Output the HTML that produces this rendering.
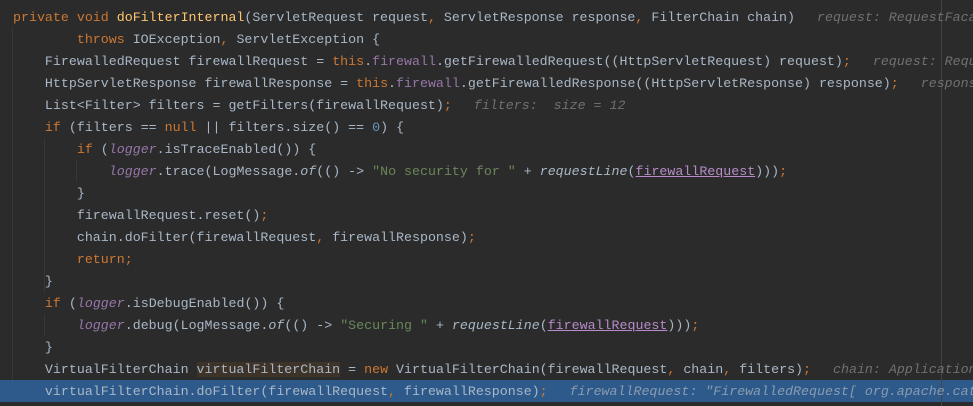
<!DOCTYPE html>
<html><head><meta charset="utf-8"><style>
html,body{margin:0;padding:0;}
body{width:973px;height:406px;background:#2b2b2b;overflow:hidden;position:relative;font-family:"Liberation Mono",monospace;font-size:13.3px;color:#a9b7c6;}
.row{position:absolute;left:0;width:973px;height:22px;line-height:23px;white-space:pre;overflow:hidden;}
.t{position:absolute;left:13px;top:0;}
.k{color:#cc7832}.m{color:#ffc66d}.f{color:#9876aa}.n{color:#6897bb}.s{color:#6a8759}
.i{font-style:italic}.h{color:#707070;font-style:italic;margin-left:6px}
.u{color:#b78cc9;text-decoration:underline}
.g{position:absolute;width:1px;background:#373737;}
.sel{background:#2d5a8a;}
.hl{background:#3e3328;}
</style></head><body>
<div class="g" style="left:12px;top:28px;height:374px"></div>
<div class="g" style="left:44px;top:138px;height:154px"></div>
<div class="g" style="left:44px;top:314px;height:22px"></div>
<div class="g" style="left:76px;top:160px;height:22px"></div>
<div class="row sel" style="top:380px"></div>
<div style="position:absolute;left:941px;top:0;width:1px;height:406px;background:#444"></div>

<div class="row" style="top:6px"><span class="t"><span class="k">private void </span><span class="m">doFilterInternal</span>(ServletRequest request<span class="k">, </span>ServletResponse response<span class="k">, </span>FilterChain chain)  <span class="h">request: RequestFacade</span></span></div>
<div class="row" style="top:28px"><span class="t">        <span class="k">throws </span>IOException<span class="k">, </span>ServletException {</span></div>
<div class="row" style="top:50px"><span class="t">    FirewalledRequest firewallRequest = <span class="k">this</span>.<span class="f">firewall</span>.getFirewalledRequest((HttpServletRequest) request)<span class="k">;</span>  <span class="h">request: RequestFacade</span></span></div>
<div class="row" style="top:72px"><span class="t">    HttpServletResponse firewallResponse = <span class="k">this</span>.<span class="f">firewall</span>.getFirewalledResponse((HttpServletResponse) response)<span class="k">;</span>  <span class="h">response: ResponseFacade</span></span></div>
<div class="row" style="top:94px"><span class="t">    List&lt;Filter&gt; filters = getFilters(firewallRequest)<span class="k">;</span>  <span class="h">filters:  size = 12</span></span></div>
<div class="row" style="top:116px"><span class="t">    <span class="k">if </span>(filters == <span class="k">null </span>|| filters.size() == <span class="n">0</span>) {</span></div>
<div class="row" style="top:138px"><span class="t">        <span class="k">if </span>(<span class="f i">logger</span>.isTraceEnabled()) {</span></div>
<div class="row" style="top:160px"><span class="t">            <span class="f i">logger</span>.trace(LogMessage.<span class="i">of</span>(() -&gt; <span class="s">"No security for "</span> + <span class="i">requestLine</span>(<span class="u">firewallRequest</span>)))<span class="k">;</span></span></div>
<div class="row" style="top:182px"><span class="t">        }</span></div>
<div class="row" style="top:204px"><span class="t">        firewallRequest.reset()<span class="k">;</span></span></div>
<div class="row" style="top:226px"><span class="t">        chain.doFilter(firewallRequest<span class="k">, </span>firewallResponse)<span class="k">;</span></span></div>
<div class="row" style="top:248px"><span class="t">        <span class="k">return;</span></span></div>
<div class="row" style="top:270px"><span class="t">    }</span></div>
<div class="row" style="top:292px"><span class="t">    <span class="k">if </span>(<span class="f i">logger</span>.isDebugEnabled()) {</span></div>
<div class="row" style="top:314px"><span class="t">        <span class="f i">logger</span>.debug(LogMessage.<span class="i">of</span>(() -&gt; <span class="s">"Securing "</span> + <span class="i">requestLine</span>(<span class="u">firewallRequest</span>)))<span class="k">;</span></span></div>
<div class="row" style="top:336px"><span class="t">    }</span></div>
<div class="row" style="top:358px"><span class="t">    VirtualFilterChain <span class="hl">virtualFilterChain</span> = <span class="k">new </span>VirtualFilterChain(firewallRequest<span class="k">, </span>chain<span class="k">, </span>filters)<span class="k">;</span>  <span class="h">chain: ApplicationFilterChain</span></span></div>
<div class="row" style="top:380px"><span class="t">    virtualFilterChain.doFilter(firewallRequest<span class="k">, </span>firewallResponse)<span class="k">;</span>  <span class="h" style="color:#8a9bb0">firewallRequest: "FirewalledRequest[ org.apache.catalina</span></span></div>
</body></html>
